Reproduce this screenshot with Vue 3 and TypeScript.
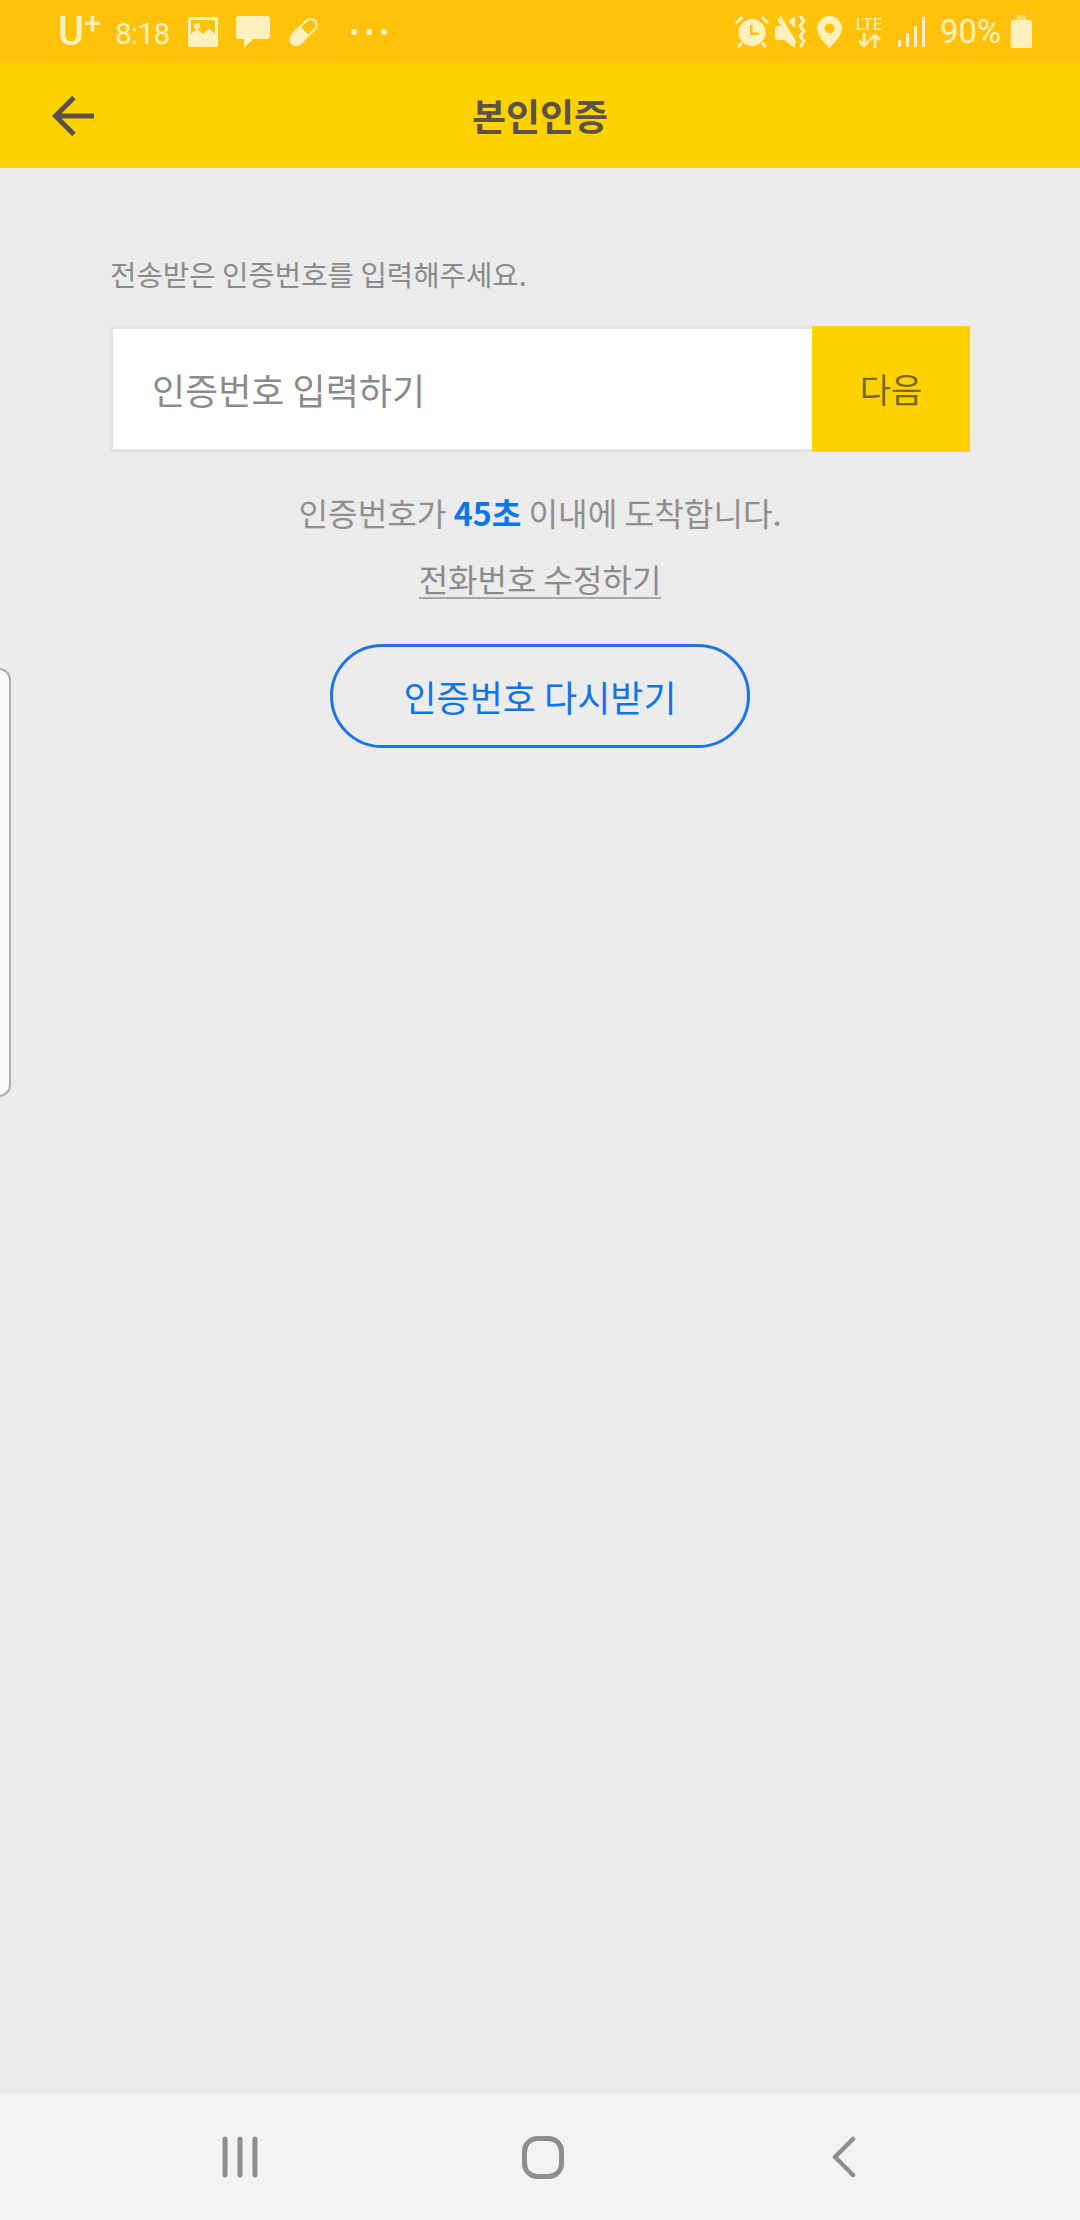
<script setup lang="ts">
const title = "본인인증";
const seconds = 45;
</script>

<template>
	<div class="screen">
		<div class="status">
			<div class="status_left">
				<span class="carrier">U<sup>+</sup></span>
				<span class="clock">8:18</span>
				<svg class="ic_image" width="30" height="30" viewBox="0 0 30 30">
					<path fill-rule="evenodd" d="M2 0H28A2 2 0 0 1 30 2V28A2 2 0 0 1 28 30H2A2 2 0 0 1 0 28V2A2 2 0 0 1 2 0ZM3 3V17L9 12L15 17L21 11L27 17V3Z" />
					<circle cx="9" cy="9" r="3" />
				</svg>
				<svg class="ic_chat" width="34" height="33" viewBox="0 0 34 33">
					<path d="M3 0H31A3 3 0 0 1 34 3V20A3 3 0 0 1 31 23H17L8 32V23H3A3 3 0 0 1 0 20V3A3 3 0 0 1 3 0Z" />
				</svg>
				<svg class="ic_pill" width="31" height="32" viewBox="0 0 31 32">
					<g transform="rotate(-45 15.5 16)">
						<path d="M15.5 10H3A6 6 0 0 0 3 22H15.5Z" transform="translate(1.5 0)" />
						<rect x="-0.5" y="10" width="32" height="12" rx="6" fill="none" stroke-width="2" />
					</g>
				</svg>
				<svg class="ic_dots" width="36" height="6" viewBox="0 0 36 6">
					<circle cx="3" cy="3" r="3" />
					<circle cx="18" cy="3" r="3" />
					<circle cx="33" cy="3" r="3" />
				</svg>
			</div>
			<div class="status_right">
				<svg class="ic_alarm" width="34" height="33" viewBox="0 0 34 33">
					<path fill-rule="evenodd" d="M17 4A13.5 13.5 0 1 1 17 31A13.5 13.5 0 1 1 17 4ZM15 10V20H24V17.5H17.5V10Z" />
					<path d="M0 7L6 1L8.5 3L2 9ZM34 7L28 1L25.5 3L32 9ZM5 27L8 29L4 33L2 31ZM29 27L26 29L30 33L32 31Z" />
				</svg>
				<svg class="ic_mute" width="31" height="33" viewBox="0 0 31 33">
					<path d="M0 15Q0 11 3 11H6L20 26V31Q20 33 17 31L9 25H3Q0 25 0 22Z" />
					<path d="M2 5L6 1L21 26L20 30Z" />
					<path d="M13 6L20 1V13Z" />
					<path d="M26 2L29 6L25 11L29 16L25 21L29 26L26 31" fill="none" stroke-width="3" stroke-linejoin="round" stroke-linecap="round" />
				</svg>
				<svg class="ic_pin" width="25" height="32" viewBox="0 0 25 32">
					<path fill-rule="evenodd" d="M12.5 0A12.5 12.5 0 0 1 25 12.5C25 19 18 26 12.5 32C7 26 0 19 0 12.5A12.5 12.5 0 0 1 12.5 0ZM12.5 7.5A5 5 0 1 0 12.5 17.5A5 5 0 1 0 12.5 7.5Z" />
				</svg>
				<div class="lte">
					<span>LTE</span>
					<svg width="24" height="15" viewBox="0 0 24 15">
						<path d="M7 0V12M2 8L7 13L12 8M18 15V3M13 7L18 2L23 7" fill="none" stroke-width="2.6" />
					</svg>
				</div>
				<svg class="ic_signal" width="27" height="30" viewBox="0 0 27 30">
					<rect x="0" y="23" width="3" height="7" rx="1" />
					<rect x="8" y="16" width="3" height="14" rx="1" />
					<rect x="16" y="9" width="3" height="21" rx="1" />
					<rect x="24" y="0" width="3" height="30" rx="1" />
				</svg>
				<span class="battery_text">90%</span>
				<svg class="ic_battery" width="21" height="33" viewBox="0 0 21 33">
					<path d="M6 0H15V5H6Z" opacity="0.55" />
					<path d="M2 5H19A2 2 0 0 1 21 7V31A2 2 0 0 1 19 33H2A2 2 0 0 1 0 31V7A2 2 0 0 1 2 5Z" />
				</svg>
			</div>
		</div>

		<div class="appbar">
			<svg class="back" width="44" height="44" viewBox="0 0 44 44">
				<path d="M42 22H4M22 3.5L3.5 22L22 40.5" fill="none" stroke="#5c5148" stroke-width="5" />
			</svg>
			<h1>{{ title }}</h1>
		</div>

		<div class="content">
			<p class="label">전송받은 인증번호를 입력해주세요.</p>
			<div class="input_row">
				<div class="input">인증번호 입력하기</div>
				<div class="next">다음</div>
			</div>
			<p class="notice">인증번호가 <b>{{ seconds }}초</b> 이내에 도착합니다.</p>
			<a class="edit">전화번호 수정하기</a>
			<button class="resend">인증번호 다시받기</button>
		</div>

		<div class="navbar">
			<svg width="36" height="42" viewBox="0 0 36 42">
				<path d="M3 3V39M18 3V39M33 3V39" fill="none" stroke="#8e8e8e" stroke-width="5" stroke-linecap="round" />
			</svg>
			<svg class="home" width="42" height="43" viewBox="0 0 42 43">
				<rect x="2.5" y="2.5" width="37" height="38" rx="13" fill="none" stroke="#8e8e8e" stroke-width="5" />
			</svg>
			<svg width="24" height="42" viewBox="0 0 24 42">
				<path d="M21 3L3 21L21 39" fill="none" stroke="#8e8e8e" stroke-width="4.5" stroke-linecap="round" stroke-linejoin="round" />
			</svg>
		</div>

		<!-- edge panel handle, lies over the page -->
		<div class="edge"></div>
	</div>
</template>

<style scoped>
.screen {
	position: relative;
	display: flex;
	flex-direction: column;
	width: 1080px;
	height: 2220px;
	overflow: hidden;
	background: #ececec;
	font-family: "Noto Sans CJK KR", "Noto Sans", sans-serif;
}

.status {
	display: flex;
	justify-content: space-between;
	align-items: center;
	height: 63px;
	flex-shrink: 0;
	padding: 0 48px 0 58px;
	box-sizing: border-box;
	background: #ffc10a;
	color: #fff0bd;
}

.status svg {
	fill: #fff0bd;
	stroke: #fff0bd;
	stroke-width: 0;
	flex-shrink: 0;
}

.status_left,
.status_right {
	display: flex;
	align-items: center;
}

.carrier {
	width: 41px;
	font: 500 40px/48px Roboto, sans-serif;
}

.carrier sup {
	font-size: 30px;
	line-height: 0;
	vertical-align: 12px;
}

.clock {
	width: 52px;
	margin-left: 16px;
	margin-top: 5px;
	font: 400 30px/36px Roboto, sans-serif;
	letter-spacing: -0.8px;
}

.ic_image {
	margin-left: 21px;
}

.ic_chat {
	margin-left: 18px;
	margin-top: 2px;
}

.ic_pill {
	margin-left: 18px;
}

.ic_dots {
	margin-left: 32px;
}

.ic_mute {
	margin-left: 6px;
}

.ic_pin {
	margin-left: 11px;
}

.lte {
	display: flex;
	flex-direction: column;
	align-items: center;
	width: 32px;
	margin-left: 11px;
	font: 400 17px/17px Roboto, sans-serif;
}

.status .lte svg {
	stroke-width: 2.6;
}

.ic_signal {
	margin-left: 13px;
}

.battery_text {
	width: 63px;
	margin-left: 15px;
	font: 400 33px/40px Roboto, sans-serif;
}

.ic_battery {
	margin-left: 8px;
}

.appbar {
	position: relative;
	display: flex;
	justify-content: center;
	align-items: center;
	height: 105px;
	flex-shrink: 0;
	background: #ffd200;
}

.appbar .back {
	position: absolute;
	left: 52px;
	top: 31px;
}

.appbar h1 {
	margin: 0;
	color: #5c5148;
	font-size: 37px;
	font-weight: 700;
	line-height: 105px;
}

.content {
	display: flex;
	flex: 1;
	flex-direction: column;
	align-items: center;
	padding: 84px 110px 0;
}

.content p {
	margin: 0;
}

.label {
	align-self: flex-start;
	color: #8b8b8b;
	font-size: 28.7px;
	line-height: 44px;
}

.input_row {
	display: flex;
	width: 860px;
	height: 126px;
	margin-top: 30px;
}

.input {
	flex: 1;
	padding-left: 39px;
	border: 3px solid #e4e4e4;
	border-right: 0;
	background: #fff;
	color: #8b8b8b;
	font-size: 36px;
	line-height: 120px;
}

.next {
	width: 158px;
	background: #ffd200;
	color: #7c6620;
	font-size: 34px;
	line-height: 126px;
	text-align: center;
}

.notice {
	margin-top: 38px !important;
	color: #8f8f8f;
	font-size: 32.2px;
	line-height: 44px;
}

.notice b {
	color: #0f75e6;
	font-weight: 700;
}

.edit {
	margin-top: 25px;
	border-bottom: 2px solid #a8a8a8;
	color: #8b8b8b;
	font-size: 32px;
	line-height: 38px;
}

.resend {
	width: 420px;
	height: 104px;
	margin-top: 45px;
	padding: 0;
	border: 3px solid #1a76e4;
	border-radius: 52px;
	background: transparent;
	color: #0f75e6;
	font-family: inherit;
	font-size: 36px;
}

.navbar {
	display: flex;
	align-items: center;
	justify-content: space-between;
	height: 126px;
	flex-shrink: 0;
	padding: 0 224px 0 222px;
	box-sizing: border-box;
	background: #f3f3f3;
}

.navbar .home {
	margin-right: 4px;
}

.edge {
	position: absolute;
	left: -13px;
	top: 668px;
	width: 20px;
	height: 425px;
	border: 2px solid #acacac;
	border-radius: 12px;
	background: #fafafa;
}
</style>
